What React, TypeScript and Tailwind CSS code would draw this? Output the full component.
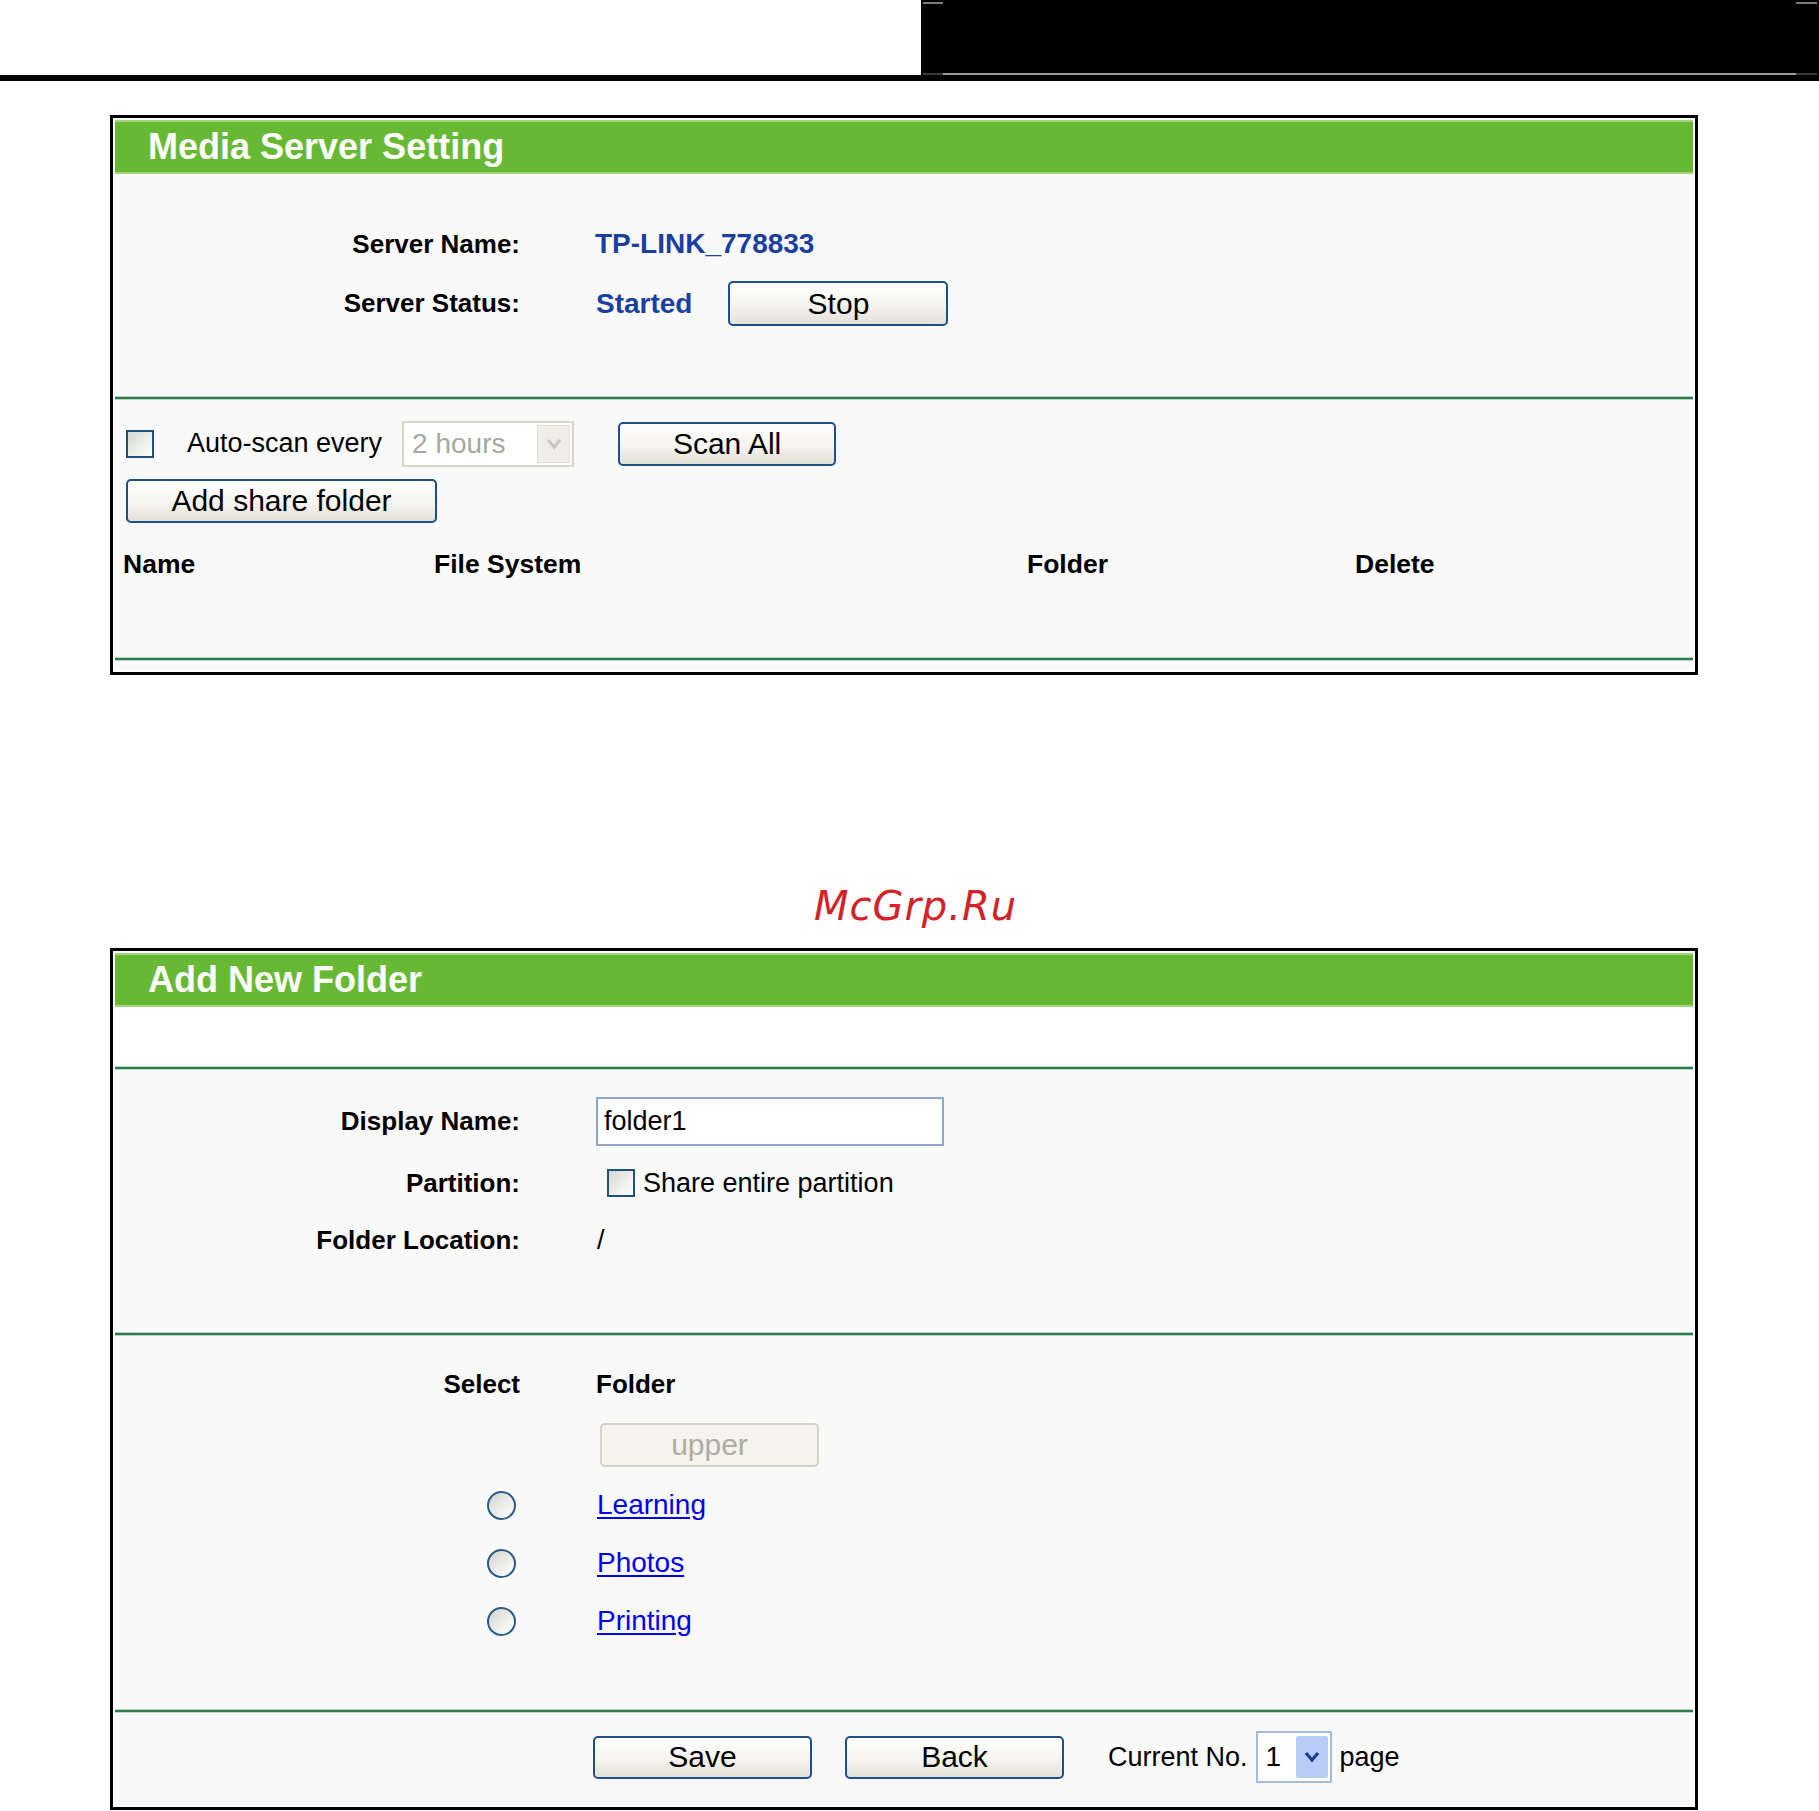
import React from "react";

function Btn({ children, className = "" }: { children: React.ReactNode; className?: string }) {
  return (
    <button
      type="button"
      className={`flex items-center justify-center rounded-[5px] border-2 border-[#1f4f8a] bg-linear-to-b from-white via-[#f6f5f1] to-[#e4e1d8] text-[30px] leading-none text-black ${className}`}
    >
      {children}
    </button>
  );
}

function Chevron({ color }: { color: string }) {
  return (
    <svg width="18" height="14" viewBox="0 0 18 14">
      <polyline points="3,3 9,10 15,3" fill="none" stroke={color} strokeWidth="3.2" strokeLinejoin="miter" />
    </svg>
  );
}

function Checkbox({ className = "" }: { className?: string }) {
  return (
    <div
      className={`h-[28px] w-[28px] shrink-0 border-2 border-[#1c5180] bg-linear-to-br from-[#d8d8d1] to-white ${className}`}
    />
  );
}

function Radio() {
  return (
    <div className="h-[29px] w-[29px] rounded-full border-2 border-[#2a5a88] bg-linear-to-br from-[#d5d5cf] to-white" />
  );
}

function Divider({ className = "" }: { className?: string }) {
  return <div className={`h-[4px] border-y border-[#b6d9c1] bg-[#2b7b4c] ${className}`} />;
}

function Header({ title }: { title: string }) {
  return (
    <div className="flex h-[54px] items-center border-y-2 border-[#9ed57d] bg-[#67b934] pl-[33px]">
      <span className="text-[36px] font-bold leading-none text-white">{title}</span>
    </div>
  );
}

function Label({ children }: { children: React.ReactNode }) {
  return <div className="w-[405px] shrink-0 text-right text-[26px] font-bold text-black">{children}</div>;
}

export default function App() {
  return (
    <div className="min-h-[1811px] w-[1819px] bg-white font-['Liberation_Sans',Arial,sans-serif] text-black">
      {/* top strip */}
      <div className="flex h-[75px]">
        <div className="w-[921px] bg-white" />
        <div className="relative flex-1 bg-black">
          <div className="absolute left-[2px] top-[2px] h-[2px] w-[20px] bg-[#7a7a7a]" />
          <div className="absolute right-[2px] top-[2px] h-[2px] w-[21px] bg-[#7a7a7a]" />
          <div className="absolute bottom-[0px] left-[2px] right-[2px] flex h-[2px]">
            <div className="w-[20px] bg-[#3a3a3a]" />
            <div className="flex-1 bg-[#9a9a9a]" />
            <div className="w-[21px] bg-[#3a3a3a]" />
          </div>
        </div>
      </div>
      <div className="h-[6px] bg-black" />

      {/* Box 1 */}
      <div className="ml-[110px] mt-[34px] w-[1588px] border-[3px] border-black bg-white p-[2px]">
        <Header title="Media Server Setting" />
        <div className="bg-[#f9f9f9]">
          <div className="pb-[70px] pt-[48px]">
            <div className="flex h-[44px] items-center">
              <Label>Server Name:</Label>
              <div className="ml-[75px] text-[28px] font-bold text-[#1b3f9f]">TP-LINK_778833</div>
            </div>
            <div className="mt-[15px] flex h-[45px] items-center">
              <Label>Server Status:</Label>
              <div className="ml-[76px] text-[28px] font-bold text-[#1b3f9f]">Started</div>
              <Btn className="ml-[36px] h-[45px] w-[220px]">Stop</Btn>
            </div>
          </div>
          <Divider />
          <div className="pt-[20px]">
            <div className="flex h-[47px] items-center">
              <Checkbox className="ml-[11px]" />
              <span className="ml-[33px] text-[27px]">Auto-scan every</span>
              <div className="ml-[20px] flex h-[46px] w-[172px] border-2 border-[#d6d4c6] bg-white">
                <span className="flex-1 pl-[8px] text-[28px] leading-[42px] text-[#a9a89e]">2 hours</span>
                <div className="m-[2px] flex w-[33px] items-center justify-center border border-[#e2e1da] bg-[#eeede8]">
                  <Chevron color="#c9c8c0" />
                </div>
              </div>
              <Btn className="ml-[44px] h-[44px] w-[218px]">Scan All</Btn>
            </div>
            <Btn className="ml-[11px] mt-[12px] h-[44px] w-[311px]">Add share folder</Btn>
            <div className="mt-[27px] flex h-[30px] items-center text-[26.5px] font-bold">
              <div className="w-[319px] pl-[8px]">Name</div>
              <div className="w-[593px]">File System</div>
              <div className="w-[328px]">Folder</div>
              <div>Delete</div>
            </div>
          </div>
          <Divider className="mt-[77px]" />
          <div className="h-[9px]" />
        </div>
      </div>

      {/* watermark */}
      <div className="flex h-[273px] justify-center pl-[12px] pt-[207px]">
        <span className="font-['DejaVu_Sans',sans-serif] text-[40px] italic leading-[48px] tracking-[1px] text-[#d42228]">
          McGrp.Ru
        </span>
      </div>

      {/* Box 2 */}
      <div className="ml-[110px] w-[1588px] border-[3px] border-black bg-white p-[2px]">
        <Header title="Add New Folder" />
        <div className="bg-[#f9f9f9]">
          <Divider className="mt-[59px]" />
          <div className="pb-[72px] pt-[27px]">
            <div className="flex h-[49px] items-center">
              <Label>Display Name:</Label>
              <div className="ml-[76px] flex h-[49px] w-[348px] items-center border-2 border-[#8fa9cc] bg-white pl-[6px] text-[27px]">
                folder1
              </div>
            </div>
            <div className="mt-[17px] flex h-[40px] items-center">
              <Label>Partition:</Label>
              <Checkbox className="ml-[87px]" />
              <span className="ml-[8px] text-[27px]">Share entire partition</span>
            </div>
            <div className="mt-[17px] flex h-[40px] items-center">
              <Label>Folder Location:</Label>
              <span className="ml-[77px] text-[27px]">/</span>
            </div>
          </div>
          <Divider />
          <div className="pt-[33px]">
            <div className="flex h-[30px] items-center">
              <Label>Select</Label>
              <div className="ml-[76px] text-[26px] font-bold">Folder</div>
            </div>
            <div className="mt-[24px] flex">
              <div className="w-[405px] shrink-0" />
              <button
                type="button"
                className="ml-[80px] flex h-[44px] w-[219px] items-center justify-center rounded-[5px] border-2 border-[#d5d3c6] bg-[#f4f3ee] text-[30px] leading-none text-[#aeada3]"
              >
                upper
              </button>
            </div>
            {["Learning", "Photos", "Printing"].map((f) => (
              <div key={f} className="mt-[18px] flex h-[40px] items-center">
                <div className="flex w-[405px] shrink-0 justify-end pr-[4px]">
                  <Radio />
                </div>
                <a href="#" className="ml-[77px] text-[28px] text-[#0000ee] underline underline-offset-[3px]">
                  {f}
                </a>
              </div>
            ))}
          </div>
          <Divider className="mt-[68px]" />
          <div className="mt-[18px] flex h-[52px] items-center">
            <Btn className="ml-[478px] h-[43px] w-[219px]">Save</Btn>
            <Btn className="ml-[33px] h-[43px] w-[219px]">Back</Btn>
            <span className="ml-[44px] text-[27px]">Current No.</span>
            <div className="ml-[8px] flex h-[52px] w-[76px] border-2 border-[#a6bcdc] bg-white">
              <span className="flex-1 pl-[8px] text-[28px] leading-[48px]">1</span>
              <div className="my-[3px] mr-[2px] flex w-[32px] items-center justify-center rounded-[2px] bg-[#b8cdf6]">
                <Chevron color="#1d3f8f" />
              </div>
            </div>
            <span className="ml-[8px] text-[27px]">page</span>
          </div>
          <div className="h-[22px]" />
        </div>
      </div>
    </div>
  );
}
